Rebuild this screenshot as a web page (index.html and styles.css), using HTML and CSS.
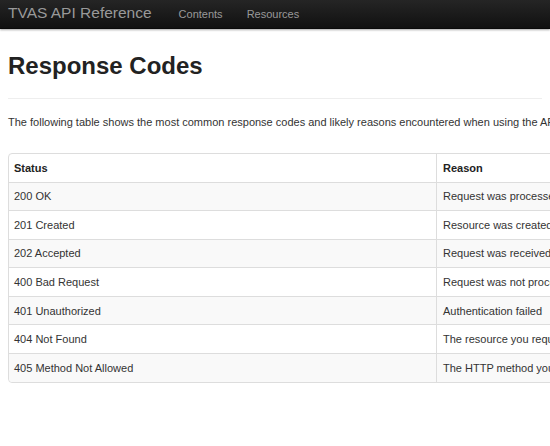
FILE: index.html
```html
<!DOCTYPE html>
<html>
<head>
<meta charset="utf-8">
<link rel="stylesheet" href="styles.css">
</head>
<body>
<div class="navbar">
  <a class="brand">TVAS API Reference</a>
  <ul class="nav">
    <li><a>Contents</a></li>
    <li><a>Resources</a></li>
  </ul>
</div>
<div class="container">
  <div class="page-header">
    <h1>Response Codes</h1>
  </div>
  <p class="lead-text">The following table shows the most common response codes and likely reasons encountered when using the API.</p>
  <table class="codes">
    <thead>
      <tr><th class="col-status">Status</th><th>Reason</th></tr>
    </thead>
    <tbody>
      <tr><td>200 OK</td><td>Request was processed successfully</td></tr>
      <tr><td>201 Created</td><td>Resource was created successfully</td></tr>
      <tr><td>202 Accepted</td><td>Request was received and will be processed</td></tr>
      <tr><td>400 Bad Request</td><td>Request was not processed due to invalid input</td></tr>
      <tr><td>401 Unauthorized</td><td>Authentication failed</td></tr>
      <tr><td>404 Not Found</td><td>The resource you requested does not exist</td></tr>
      <tr><td>405 Method Not Allowed</td><td>The HTTP method you used is not supported</td></tr>
    </tbody>
  </table>
</div>
</body>
</html>
```
FILE: styles.css
```css
html, body {
  margin: 0;
  padding: 0;
  overflow: hidden;
}
body {
  font-family: "Liberation Sans", Arial, sans-serif;
  font-size: 11px;
  color: #333;
  background: #fff;
  width: 550px;
}
.navbar {
  height: 28px;
  background: linear-gradient(#252525, #111);
  border-bottom: 1px solid #0a0a0a;
  box-shadow: 0 1px 2px rgba(0,0,0,0.35);
  display: flex;
  align-items: center;
  padding: 0 8px;
  white-space: nowrap;
}
.brand {
  font-size: 15.5px;
  color: #999;
  margin-right: 27px;
  position: relative;
  top: -1px;
}
.nav {
  list-style: none;
  margin: 0;
  padding: 0;
  display: flex;
  gap: 24px;
}
.nav a {
  color: #999;
  font-size: 11px;
}
.container {
  padding: 0 8px;
  width: 1000px;
}
.page-header {
  width: 534px;
  border-bottom: 1px solid #eee;
  padding: 23px 0 18px;
}
h1 {
  margin: 0;
  font-size: 24px;
  font-weight: bold;
  line-height: 28px;
  color: #222;
}
.lead-text {
  margin: 14px 0 22px;
  line-height: 18px;
  white-space: nowrap;
}
.codes {
  width: 860px;
  border-collapse: separate;
  border-spacing: 0;
  border: 1px solid #ddd;
  border-radius: 4px;
  font-size: 11px;
}
.codes th, .codes td {
  text-align: left;
  padding: 0 6px;
  height: 27.57px;
  border-left: 1px solid #ddd;
  border-top: 1px solid #ddd;
  vertical-align: middle;
  line-height: 18px;
}
.codes th:first-child, .codes td:first-child {
  border-left: 0;
  padding-left: 5px;
}
.codes thead th {
  border-top: 0;
  font-weight: bold;
  color: #222;
}
.col-status {
  width: 416px;
}
.codes tbody tr:nth-child(odd) td {
  background: #f9f9f9;
}
.codes tbody tr:last-child td:first-child {
  border-bottom-left-radius: 4px;
}
```
